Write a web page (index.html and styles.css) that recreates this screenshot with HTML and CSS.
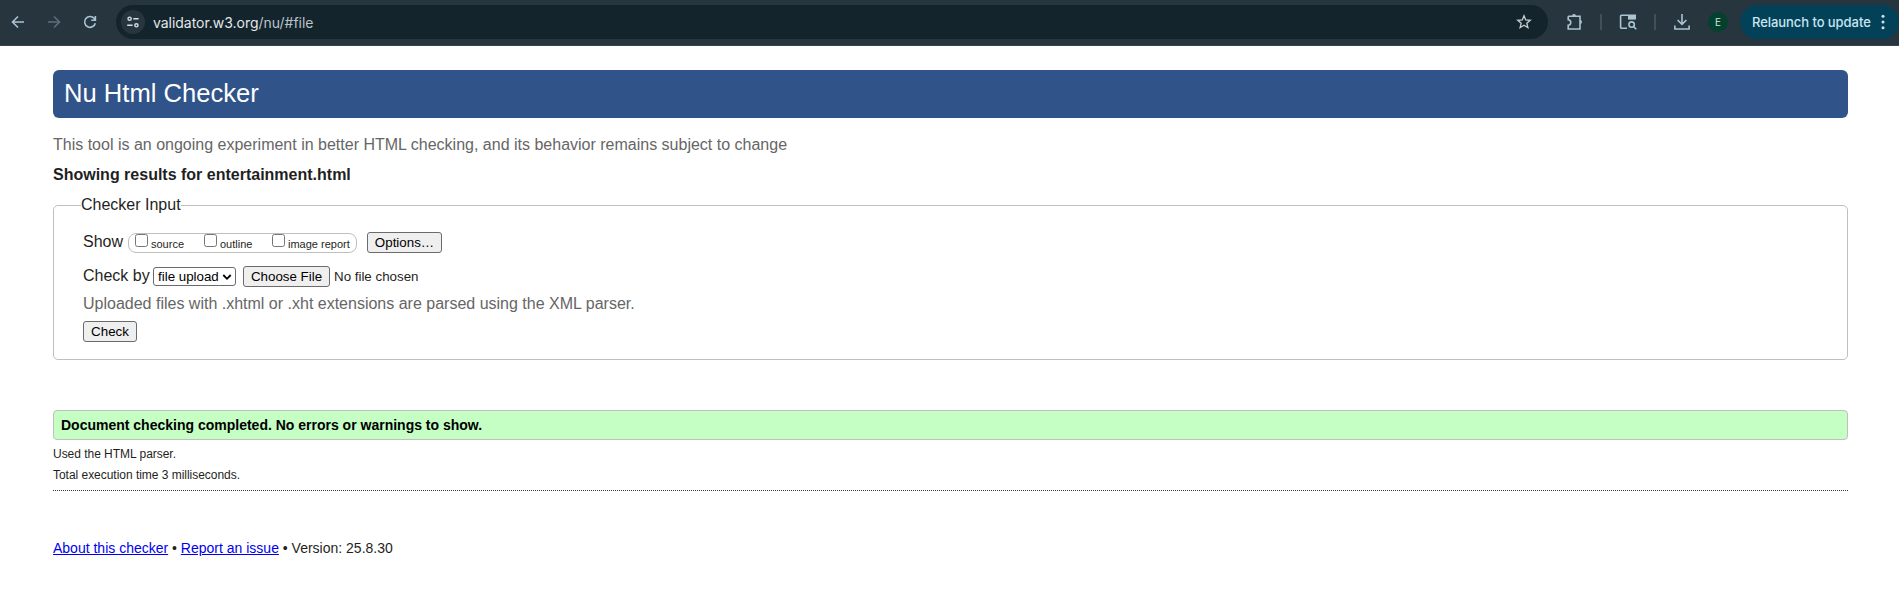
FILE: index.html
```html
<!DOCTYPE html>
<html lang="en">
<head>
<meta charset="utf-8">
<title>Nu Html Checker</title>
<link rel="stylesheet" href="styles.css">
</head>
<body>
<div class="toolbar">
  <div class="nav">
    <svg width="16" height="16" viewBox="0 0 16 16" class="ico"><path d="M14 8H2.8M8 2.5L2.5 8L8 13.5"/></svg>
    <svg width="16" height="16" viewBox="0 0 16 16" class="ico dim"><path d="M2 8H13.2M8 2.5L13.5 8L8 13.5"/></svg>
    <svg width="16" height="16" viewBox="0 0 16 16" class="ico"><path d="M13.3 9.2A5.4 5.4 0 1 1 12.3 4.6L13.3 5.8M13.4 2V6.2H9.2"/></svg>
  </div>
  <div class="address">
    <span class="site"><svg width="14" height="14" viewBox="0 0 14 14" class="ico light"><circle cx="3.6" cy="3.7" r="1.6"/><path d="M7.3 3.7H12.6M1.2 10.3H6.6"/><circle cx="10.4" cy="10.3" r="1.6"/></svg></span>
    <span class="url"><span class="host">validator.w3.org</span>/nu/#file</span>
    <svg width="16" height="16" viewBox="0 0 16 16" class="ico star"><path d="M8 1.8L9.7 6L14.2 6.3L10.8 9.2L11.9 13.7L8 11.2L4.1 13.7L5.2 9.2L1.8 6.3L6.3 6Z"/></svg>
  </div>
  <div class="actions">
    <svg width="18" height="18" viewBox="0 0 18 18" class="ico puzzle"><path d="M2.2 3.2H6.3M9.7 3.2H14V7.2M14 10.8V16H2.2V12.3C5.6 12.2 5.6 6.9 2.2 6.8V3.2M6 3.2H10M14 7V11"/><path class="fill" d="M6 3.3A2 2.3 0 0 1 10 3.3ZM14 7A2 2 0 0 1 14 11Z"/></svg>
    <span class="sep"></span>
    <svg width="18" height="18" viewBox="0 0 18 18" class="ico search"><path d="M8 15.2H2.6A1 1 0 0 1 1.6 14.2V3.2A1 1 0 0 1 2.6 2.2H16.2V6"/><path class="fill" d="M9 2H16.8V6.6H9Z"/><circle cx="12.6" cy="11.6" r="2.7"/><path d="M14.5 13.5L17.3 16.3"/></svg>
    <span class="sep"></span>
    <svg width="18" height="18" viewBox="0 0 18 18" class="ico download"><path d="M9 1V11.2M4.6 7L9 11.4L13.4 7M1.9 12.5V16H16.1V12.5"/></svg>
    <span class="avatar">E</span>
    <span class="relaunch"><span>Relaunch to update</span><svg width="4" height="16" viewBox="0 0 4 16"><circle cx="2" cy="2.3" r="1.5"/><circle cx="2" cy="8" r="1.5"/><circle cx="2" cy="13.7" r="1.5"/></svg></span>
  </div>
</div>
<main class="page">
  <h1 class="banner"><span>Nu Html Checker</span></h1>
  <p class="tagline"><span>This tool is an ongoing experiment in better HTML checking, and its behavior remains subject to change</span></p>
  <h2 class="results"><span>Showing results for entertainment.html</span></h2>
  <fieldset class="inputs">
    <legend>Checker Input</legend>
    <div class="row show">
      <span class="label">Show</span>
      <span class="group">
        <label><input type="checkbox"><span>source</span></label>
        <label><input type="checkbox"><span>outline</span></label>
        <label><input type="checkbox"><span>image report</span></label>
      </span>
      <button class="btn options" type="button">Options…</button>
    </div>
    <div class="row by">
      <span class="label">Check by</span>
      <button class="select" type="button"><span>file upload</span><svg width="10" height="8" viewBox="0 0 10 8"><path d="M1.3 2L5 5.8L8.7 2"/></svg></button>
      <button class="btn choose" type="button">Choose File</button>
      <span class="nofile">No file chosen</span>
    </div>
    <p class="hint"><span>Uploaded files with .xhtml or .xht extensions are parsed using the XML parser.</span></p>
    <button class="btn check" type="button">Check</button>
  </fieldset>
  <p class="success"><span>Document checking completed. No errors or warnings to show.</span></p>
  <p class="stat"><span>Used the HTML parser.</span></p>
  <p class="stat"><span>Total execution time 3 milliseconds.</span></p>
  <hr class="rule">
  <p class="footer"><a href="#">About this checker</a> <span class="dot">•</span> <a href="#">Report an issue</a> <span class="dot">•</span> <span>Version: 25.8.30</span></p>
</main>
</body>
</html>
```
FILE: styles.css
```css
* { box-sizing: border-box; }
body { margin: 0; background: #fff; color: #1f1f23; font-family: "Liberation Sans", Arial, sans-serif; font-size: 16px; }
p, h1, h2 { margin: 0; }

.toolbar { display: flex; height: 46px; padding-bottom: 1px; align-items: center; background: #27363e; border-bottom: 1px solid #37444b; font-family: Inter, sans-serif; }
.nav { display: flex; flex: none; gap: 20px; padding-left: 10px; width: 116px; }
.ico { display: block; flex: none; fill: none; stroke: #a9c4d3; stroke-width: 1.6; }
.ico.dim { stroke: #5d6f79; }
.ico.light { stroke: #d5dfe4; stroke-width: 1.4; }
.ico .fill { fill: #a9c4d3; stroke: none; }
.ico.star { stroke: #c7cfd3; stroke-width: 1.3; margin-left: auto; margin-right: 16px; }
.address { display: flex; flex: none; align-items: center; width: 1432px; height: 34px; border-radius: 17px; background: #14242c; padding-left: 5px; }
.site { display: flex; align-items: center; justify-content: center; width: 24px; height: 24px; border-radius: 50%; background: #27363e; }
.url { margin-left: 8px; font-size: 14px; letter-spacing: -0.03px; color: #b9c3c8; }
.host { color: #e2e8eb; }
.actions { display: flex; align-items: center; flex: 1; }
.puzzle { margin-left: 18px; margin-right: 16px; }
.sep { width: 2px; height: 16px; background: #3f515b; }
.search { margin: 0 17px; }
.download { margin-left: 17px; }
.avatar { display: flex; align-items: center; justify-content: center; width: 20px; height: 20px; margin-left: 17px; border-radius: 50%; background: #05402f; color: #c5e5d5; font-size: 10px; }
.relaunch { display: flex; align-items: center; width: 159px; height: 34px; margin-left: 12px; padding: 0 14px 0 12px; justify-content: space-between; border-radius: 17px; background: #034158; color: #c8e5f2; font-size: 13px; font-weight: 500; letter-spacing: -0.06px; white-space: nowrap; }
.relaunch svg { fill: #c8e5f2; }

.page { display: flex; flex-direction: column; padding: 24px 51px 0 53px; }
.banner { height: 48px; padding-left: 11px; border-radius: 6px; background: #30538a; color: #fff; font-size: 25.6px; font-weight: 400; line-height: 46px; }
.tagline { height: 30px; margin-top: 12px; color: #666; line-height: 30px; }
.results { height: 30px; font-size: 16px; line-height: 30px; }
.inputs { height: 164px; margin: 6px 0 0; padding: 18px 29px 0; border: 1px solid #bfbfbf; border-radius: 5px; }
.inputs legend { height: 18px; margin-left: -2px; padding: 0; line-height: 18px; }
.row { display: flex; align-items: center; height: 21px; line-height: 21px; }
.row .label { flex: none; margin-top: -3px; }
.show .label { width: 45px; }
.by { margin-top: 13px; }
.by .label { width: 70px; }
.group { display: flex; width: 229px; height: 20px; padding-left: 6px; border: 1px solid #bfbfbf; border-radius: 8px; font-size: 11px; }
.group label { display: flex; }
.group label:nth-child(1) { width: 69px; }
.group label:nth-child(2) { width: 68px; }
.group input { flex: none; width: 13px; height: 13px; margin: 0 3px 0 0; }
.group label span { line-height: 20px; white-space: nowrap; }
.btn { height: 21px; padding: 0; border: 1px solid #6b6b6b; border-radius: 3px; background: #efefef; color: #000; font: 13.333px/18px "Liberation Sans", Arial, sans-serif; }
.options { width: 75px; margin-left: 10px; }
.select { display: flex; align-items: center; justify-content: space-between; width: 83px; height: 19px; padding: 0 3px 0 4px; border: 1px solid #6b6b6b; border-radius: 3px; background: #fff; color: #000; font: 13.333px/17px "Liberation Sans", Arial, sans-serif; white-space: nowrap; }
.select svg { fill: none; stroke: #000; stroke-width: 1.8; }
.choose { width: 87px; margin-left: 7px; }
.nofile { margin-left: 4px; font-size: 13.333px; }
.hint { height: 26px; margin-top: 4px; color: #666; line-height: 26px; }
.check { display: block; width: 54px; margin-top: 4px; }
.success { height: 30px; margin-top: 50px; padding-left: 7px; border: 1px solid #bfbfbf; border-radius: 4px; background: #c6ffc4; color: #000; font-size: 14px; font-weight: 700; line-height: 29px; }
.stat { height: 21px; font-size: 12px; letter-spacing: -0.03px; line-height: 21px; }
.success + .stat { margin-top: 4px; }
.rule { width: 100%; margin: 4px 0 0; border: 0; border-top: 1px dotted #333; }
.footer { height: 20px; margin-top: 47px; font-size: 14px; line-height: 20px; }
.footer a { color: #0000ee; }
```
